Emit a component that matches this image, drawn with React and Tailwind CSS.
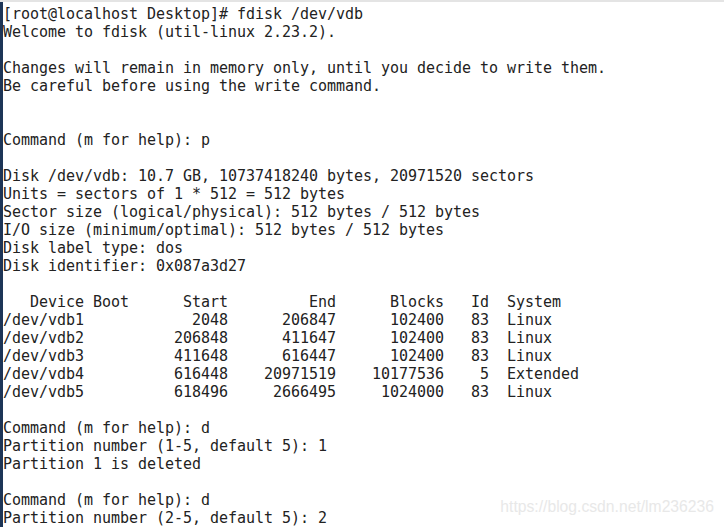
export default function App() {
  const lines = [
    "[root@localhost Desktop]# fdisk /dev/vdb",
    "Welcome to fdisk (util-linux 2.23.2).",
    "",
    "Changes will remain in memory only, until you decide to write them.",
    "Be careful before using the write command.",
    "",
    "",
    "Command (m for help): p",
    "",
    "Disk /dev/vdb: 10.7 GB, 10737418240 bytes, 20971520 sectors",
    "Units = sectors of 1 * 512 = 512 bytes",
    "Sector size (logical/physical): 512 bytes / 512 bytes",
    "I/O size (minimum/optimal): 512 bytes / 512 bytes",
    "Disk label type: dos",
    "Disk identifier: 0x087a3d27",
    "",
    "   Device Boot      Start         End      Blocks   Id  System",
    "/dev/vdb1            2048      206847      102400   83  Linux",
    "/dev/vdb2          206848      411647      102400   83  Linux",
    "/dev/vdb3          411648      616447      102400   83  Linux",
    "/dev/vdb4          616448    20971519    10177536    5  Extended",
    "/dev/vdb5          618496     2666495     1024000   83  Linux",
    "",
    "Command (m for help): d",
    "Partition number (1-5, default 5): 1",
    "Partition 1 is deleted",
    "",
    "Command (m for help): d",
    "Partition number (2-5, default 5): 2",
  ];
  return (
    <div className="relative w-[724px] h-[527px] overflow-hidden bg-white flex flex-col">
      <div className="h-[2px] bg-[#e4e4e4] shrink-0" />
      <div className="flex flex-1">
        <div className="w-[3px] bg-[#1d3557] shrink-0" />
        <pre
          className="m-0 pt-[3px] pl-0 text-[15px] leading-[18px] text-[#222] whitespace-pre tracking-[-0.03px]"
          style={{ fontFamily: '"DejaVu Sans Mono", monospace' }}
        >
          {lines.map((l, i) => (
            <div key={i} className="h-[18px]">{l}</div>
          ))}
        </pre>
      </div>
      <div
        className="absolute right-[10px] top-[497px] text-[15.7px] leading-[20px] text-[#e8e8e8]"
        style={{ fontFamily: '"Liberation Sans", Arial, sans-serif' }}
      >
        https://blog.csdn.net/lm236236
      </div>
    </div>
  );
}
